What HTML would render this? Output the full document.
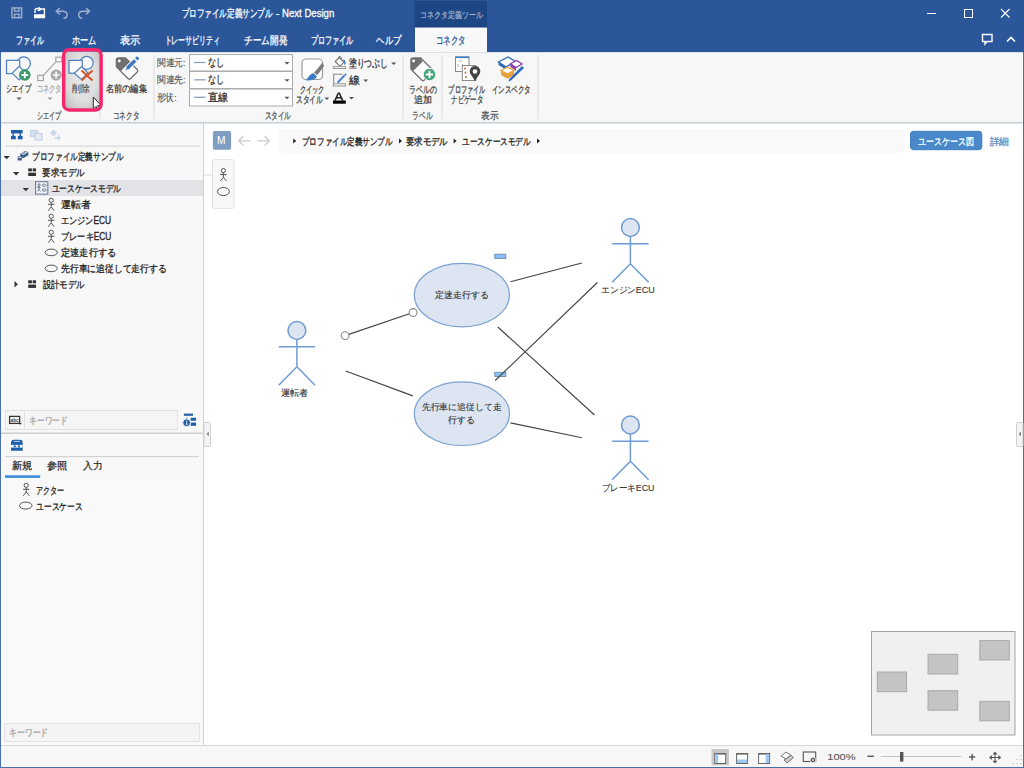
<!DOCTYPE html>
<html lang="ja"><head><meta charset="utf-8">
<style>
*{margin:0;padding:0}
html,body{width:1024px;height:768px;overflow:hidden;background:#2b579a}
svg{display:block;font-family:"Liberation Sans", sans-serif}
</style></head><body>
<svg width="1024" height="768" viewBox="0 0 1024 768">
<rect x="0" y="0" width="1024" height="768" fill="#4a6fab"/><rect x="0" y="0" width="1024" height="52" fill="#2b579a"/><rect x="414.5" y="1" width="72.5" height="27" fill="#1d4784"/><rect x="414.5" y="26.6" width="72.5" height="1" fill="#163d78"/><rect x="1" y="52" width="1022" height="70" fill="#f7f7f7"/><rect x="415" y="27.5" width="72" height="25" fill="#f8f8f8"/><rect x="1" y="52" width="1022" height="1" fill="#d5e0ea"/><rect x="1" y="123" width="203" height="622" fill="#f8f8f8"/><rect x="203" y="123" width="1" height="622" fill="#d0d0d0"/><rect x="204" y="123" width="819" height="622" fill="#ffffff"/><rect x="1" y="122" width="1022" height="1.5" fill="#c3d0d9"/><rect x="1" y="745" width="1022" height="22" fill="#f7f7f7"/><rect x="1" y="745" width="1022" height="1" fill="#d8d8d8"/><text x="181.50" y="16.60" font-size="11.16" fill="#ffffff" textLength="91.00" lengthAdjust="spacingAndGlyphs" stroke="#ffffff" stroke-width="0.3">プロファイル定義サンプル</text><text x="275.80" y="16.60" font-size="11.16" fill="#ffffff" textLength="3.70" lengthAdjust="spacingAndGlyphs" stroke="#ffffff" stroke-width="0.3">-</text><text x="282.00" y="16.60" font-size="11.62" fill="#ffffff" textLength="52.30" lengthAdjust="spacingAndGlyphs" stroke="#ffffff" stroke-width="0.3">Next Design</text><text x="419.50" y="17.60" font-size="9.3" fill="#adbcd3" textLength="63.00" lengthAdjust="spacingAndGlyphs" stroke="#adbcd3" stroke-width="0.15">コネクタ定義ツール</text><text x="15.50" y="44.30" font-size="10.7" fill="#ffffff" textLength="28.00" lengthAdjust="spacingAndGlyphs" stroke="#ffffff" stroke-width="0.3">ファイル</text><text x="71.80" y="44.30" font-size="10.7" fill="#ffffff" textLength="24.70" lengthAdjust="spacingAndGlyphs" stroke="#ffffff" stroke-width="0.3">ホーム</text><text x="120.10" y="44.30" font-size="10.7" fill="#ffffff" textLength="20.40" lengthAdjust="spacingAndGlyphs" stroke="#ffffff" stroke-width="0.3">表示</text><text x="164.50" y="44.30" font-size="10.7" fill="#ffffff" textLength="55.70" lengthAdjust="spacingAndGlyphs" stroke="#ffffff" stroke-width="0.3">トレーサビリティ</text><text x="244.00" y="44.30" font-size="10.7" fill="#ffffff" textLength="43.20" lengthAdjust="spacingAndGlyphs" stroke="#ffffff" stroke-width="0.3">チーム開発</text><text x="310.70" y="44.30" font-size="10.7" fill="#ffffff" textLength="42.70" lengthAdjust="spacingAndGlyphs" stroke="#ffffff" stroke-width="0.3">プロファイル</text><text x="376.40" y="44.30" font-size="10.7" fill="#ffffff" textLength="24.90" lengthAdjust="spacingAndGlyphs" stroke="#ffffff" stroke-width="0.3">ヘルプ</text><text x="435.90" y="44.30" font-size="10.7" fill="#2b579a" textLength="30.00" lengthAdjust="spacingAndGlyphs" stroke="#2b579a" stroke-width="0.3">コネクタ</text><g fill="none" stroke="#9cb0cf" stroke-width="1.4"><rect x="12" y="7.9" width="9.6" height="9.8"/><path d="M14.6 7.9 v3.2 h4.4 v-3.2"/><path d="M14.6 17.7 v-3.6 h4.4 v3.6"/></g><path d="M37.5 10.2 h2.2 l1 -1.2 h3.7 v8.6" fill="none" stroke="#fff" stroke-width="1.4"/><path d="M34 14.2 h9.5 l1.6 1 v3.1 h-11.1 z" fill="#fff"/><path d="M35 13 v-2.5 q0 -2 2 -2 h2" fill="none" stroke="#fff" stroke-width="1.3"/><path d="M38.8 6.6 l2.4 1.9 l-2.4 1.9 z" fill="#fff"/><path d="M57 11.2 h5.5 c3 0 4.6 1.6 4.6 3.6 c0 2 -1.6 3.5 -3.6 3.5" fill="none" stroke="#9cb0cf" stroke-width="1.5"/><path d="M59.8 8 l-3.5 3.2 l3.5 3.2" fill="none" stroke="#9cb0cf" stroke-width="1.5"/><path d="M88.8 11.2 h-5.5 c-3 0 -4.6 1.6 -4.6 3.6 c0 2 1.6 3.5 3.6 3.5" fill="none" stroke="#9cb0cf" stroke-width="1.5"/><path d="M86 8 l3.5 3.2 l-3.5 3.2" fill="none" stroke="#9cb0cf" stroke-width="1.5"/><line x1="927" y1="13.5" x2="936" y2="13.5" stroke="#ffffff" stroke-width="1"/><rect x="964.5" y="9.5" width="8" height="8" fill="none" stroke="#ffffff" stroke-width="1"/><path d="M1001 9 L1009.5 17.5 M1009.5 9 L1001 17.5" stroke="#fff" stroke-width="1.1"/><path d="M982.5 34.5 h9.5 v7 h-5 l-2 2.5 v-2.5 h-2.5 z" fill="none" stroke="#fff" stroke-width="1.4"/><path d="M1007 41.5 l4 -4 l4 4" fill="none" stroke="#fff" stroke-width="1.6"/><rect x="153.5" y="55" width="1" height="64" fill="#dcdcdc"/><rect x="402.5" y="55" width="1" height="64" fill="#dcdcdc"/><rect x="441.5" y="55" width="1" height="64" fill="#dcdcdc"/><rect x="537.5" y="55" width="1" height="64" fill="#dcdcdc"/><rect x="99.5" y="104" width="1" height="15" fill="#dcdcdc"/><g fill="none" stroke="#4a7fc1" stroke-width="1.2"><circle cx="23.7" cy="63.6" r="6.7" fill="#f7f7f7"/><rect x="6.5" y="60.3" width="13.2" height="13.3" fill="#f7f7f7"/><path d="M12.2 73.1 L19.2 66.3 L26 73.1 L19.2 80 Z" fill="#f7f7f7"/></g><circle cx="24.8" cy="75" r="5.8" fill="#3d9a6b"/><path d="M21.5 75 h6.6 M24.8 71.7 v6.6" stroke="#fff" stroke-width="1.8"/><text x="5.90" y="92.30" font-size="10.23" fill="#444" textLength="25.10" lengthAdjust="spacingAndGlyphs" stroke="#444" stroke-width="0.3">シエイプ</text><path d="M16.5 97.5 h5 l-2.5 2.5 z" fill="#555"/><g fill="none" stroke="#a5a5a5" stroke-width="1.2"><rect x="37.8" y="75.4" width="5.6" height="5.2"/><rect x="55.8" y="57.2" width="6" height="4.6"/><path d="M43.4 75.4 L55.8 61.8"/></g><circle cx="56.2" cy="75" r="5.6" fill="#aaaaaa"/><path d="M53 75 h6.4 M56.2 71.8 v6.4" stroke="#fff" stroke-width="1.7"/><text x="36.50" y="92.30" font-size="10.23" fill="#a8a8a8" textLength="25.00" lengthAdjust="spacingAndGlyphs" stroke="#a8a8a8" stroke-width="0.3">コネクタ</text><path d="M47.5 97.5 h5 l-2.5 2.5 z" fill="#999"/><text x="37.00" y="118.80" font-size="10.23" fill="#555" textLength="24.50" lengthAdjust="spacingAndGlyphs" stroke="#555" stroke-width="0.3">シエイプ</text><defs><radialGradient id="gbtn" cx="50%" cy="45%" r="70%"><stop offset="0" stop-color="#e9e9e9"/><stop offset="0.6" stop-color="#dedede"/><stop offset="1" stop-color="#bdbdbd"/></radialGradient></defs><rect x="65.5" y="51.5" width="34" height="57" fill="url(#gbtn)"/><g fill="none" stroke="#4a7fc1" stroke-width="1.2"><circle cx="86.7" cy="62.8" r="6.5" fill="#f8f8f8"/><rect x="69" y="60.4" width="13.2" height="12.8" fill="#fafafa"/><path d="M74.3 73.2 L81.5 66.5 L88 73 L81.5 79.5 Z" fill="#fafafa"/></g><path d="M81.5 70.5 L92.5 80.5 M92.5 70.5 L81.5 80.5" stroke="#d9532a" stroke-width="2"/><text x="71.80" y="92.30" font-size="10.23" fill="#4a4a4a" textLength="17.80" lengthAdjust="spacingAndGlyphs" stroke="#4a4a4a" stroke-width="0.15">削除</text><path d="M93.3 97 L93.3 109 L96 106.3 L98 110.5 L99.5 109.8 L97.6 105.7 L101.2 105.7 Z" fill="#fff" stroke="#2a2a2a" stroke-width="1"/><rect x="63.7" y="49.7" width="37.4" height="60.2" rx="5.5" fill="none" stroke="#f5276a" stroke-width="3.5"/><path d="M116.3 60 Q116.3 57.8 118.5 57.8 L125.5 57.8 L137.2 69.5 Q138.4 70.75 137.2 72 L130.6 78.5 Q129.3 79.8 128 78.5 L116.9 67.4 Q116.3 66.8 116.3 66 Z" fill="#fff" stroke="#707070" stroke-width="1.3"/><path d="M116.3 60 Q116.3 57.8 118.5 57.8 L125.5 57.8 L129.9 62.2 L120.6 71.3 L116.9 67.4 Q116.3 66.8 116.3 66 Z" fill="#707070"/><circle cx="119.3" cy="61" r="1.4" fill="#fff"/><path d="M125.3 70.3 L136.6 59" stroke="#f7f7f7" stroke-width="5.2" stroke-linecap="round"/><path d="M127.3 68.3 L135.2 60.4" stroke="#3a78bf" stroke-width="3.4"/><path d="M136.3 59.3 L138.2 57.4" stroke="#3a78bf" stroke-width="3.4"/><path d="M127.6 66.3 L125.2 70.6 L129.5 68.2 Z" fill="#3a78bf"/><text x="105.50" y="92.30" font-size="10.23" fill="#444" textLength="41.50" lengthAdjust="spacingAndGlyphs" stroke="#444" stroke-width="0.3">名前の編集</text><text x="112.90" y="118.80" font-size="10.23" fill="#555" textLength="26.20" lengthAdjust="spacingAndGlyphs" stroke="#555" stroke-width="0.3">コネクタ</text><text x="156.80" y="65.80" font-size="9.77" fill="#5a5a5a" textLength="28.70" lengthAdjust="spacingAndGlyphs" stroke="#5a5a5a" stroke-width="0.15">関連元:</text><text x="156.80" y="83.00" font-size="9.77" fill="#5a5a5a" textLength="28.70" lengthAdjust="spacingAndGlyphs" stroke="#5a5a5a" stroke-width="0.15">関連先:</text><text x="156.80" y="100.50" font-size="9.77" fill="#5a5a5a" textLength="19.70" lengthAdjust="spacingAndGlyphs" stroke="#5a5a5a" stroke-width="0.15">形状:</text><rect x="189.5" y="54.5" width="103" height="16.5" fill="#ffffff" stroke="#ababab" stroke-width="1"/><rect x="189.5" y="71.5" width="103" height="17" fill="#ffffff" stroke="#ababab" stroke-width="1"/><rect x="189.5" y="89" width="103" height="17" fill="#ffffff" stroke="#ababab" stroke-width="1"/><line x1="194.2" y1="62.5" x2="205.7" y2="62.5" stroke="#8ea2bf" stroke-width="1.3"/><text x="208.10" y="66.10" font-size="10.7" fill="#333" textLength="16.40" lengthAdjust="spacingAndGlyphs" stroke="#333" stroke-width="0.3">なし</text><path d="M284.5 62.0 h5 l-2.5 2.5 z" fill="#555"/><line x1="194.2" y1="79.8" x2="205.7" y2="79.8" stroke="#8ea2bf" stroke-width="1.3"/><text x="208.10" y="83.40" font-size="10.7" fill="#333" textLength="16.40" lengthAdjust="spacingAndGlyphs" stroke="#333" stroke-width="0.3">なし</text><path d="M284.5 79.3 h5 l-2.5 2.5 z" fill="#555"/><line x1="194.2" y1="97.3" x2="205.7" y2="97.3" stroke="#8ea2bf" stroke-width="1.3"/><text x="208.10" y="100.90" font-size="10.7" fill="#333" textLength="20.00" lengthAdjust="spacingAndGlyphs" stroke="#333" stroke-width="0.3">直線</text><path d="M284.5 96.8 h5 l-2.5 2.5 z" fill="#555"/><text x="264.50" y="118.80" font-size="10.23" fill="#555" textLength="26.60" lengthAdjust="spacingAndGlyphs" stroke="#555" stroke-width="0.3">スタイル</text><rect x="302" y="59" width="20.5" height="20.5" rx="4" fill="#fff" stroke="#9a9a9a" stroke-width="1.2"/><path d="M322.5 62.5 L316 70.5 L314 72.5 L317 75 L319 73 L324 66 Z" fill="#7a7a7a"/><path d="M313.5 73 L317 76.5 C315 80 311 80.5 306 80.5 C308 78 309 74.5 313.5 73 Z" fill="#3c7ec6"/><text x="299.50" y="92.60" font-size="10.23" fill="#444" textLength="25.00" lengthAdjust="spacingAndGlyphs" stroke="#444" stroke-width="0.3">クイック</text><text x="295.90" y="102.50" font-size="10.23" fill="#444" textLength="26.80" lengthAdjust="spacingAndGlyphs" stroke="#444" stroke-width="0.3">スタイル</text><path d="M324.3 97.5 h5 l-2.5 2.5 z" fill="#555"/><path d="M335.2 61.5 L339.3 57.6 L344 62.3 L339.9 66.2 Z" fill="#fff" stroke="#777" stroke-width="1.1"/><path d="M338.3 58.5 Q338.3 56 340 56.2 Q341.5 56.5 341.2 59.5" fill="none" stroke="#777" stroke-width="0.9"/><path d="M343.2 59.2 C345.8 60 346.2 62.8 345 65.4 C344.2 64 343.6 62.6 343.6 61.5 Z" fill="#3c7ec6"/><rect x="333.3" y="66.7" width="12.2" height="1.8" fill="#fff" stroke="#8a8a8a" stroke-width="0.9"/><text x="348.70" y="66.50" font-size="10.7" fill="#333" textLength="39.10" lengthAdjust="spacingAndGlyphs" stroke="#333" stroke-width="0.3">塗りつぶし</text><path d="M391.2 62.5 h5 l-2.5 2.5 z" fill="#555"/><path d="M342.5 74.2 h-8.8 v9.2" fill="none" stroke="#8a8a8a" stroke-width="1.1"/><rect x="333.3" y="83.8" width="12.2" height="2.2" fill="#fff" stroke="#8a8a8a" stroke-width="0.9"/><path d="M337.6 82.6 L344.6 75.4" stroke="#3c7ec6" stroke-width="2"/><path d="M345 75 L346 74" stroke="#3c7ec6" stroke-width="2"/><text x="348.70" y="84.10" font-size="10.7" fill="#333" textLength="10.90" lengthAdjust="spacingAndGlyphs" stroke="#333" stroke-width="0.3">線</text><path d="M363.2 79.5 h5 l-2.5 2.5 z" fill="#555"/><path d="M334 100.6 L337.8 92.6 L339.8 92.6 L343.6 100.6 L341.7 100.6 L340.8 98.4 L336.8 98.4 L335.9 100.6 Z M337.4 96.9 L340.2 96.9 L338.8 93.8 Z" fill="#222" fill-rule="evenodd"/><rect x="333" y="100.5" width="12.8" height="3.2" fill="#000000"/><path d="M349 97 h5 l-2.5 2.5 z" fill="#555"/><path d="M410.9 60.2 Q410.9 58 413.1 58 L420.7 58 L432.5 69.8 L424 80.3 Q423 81.2 422 80.2 L411.5 69.7 Q410.9 69 410.9 68 Z" fill="#fff" stroke="#707070" stroke-width="1.3"/><path d="M410.9 60.2 Q410.9 58 413.1 58 L420.7 58 L422.5 61.8 L413.6 70.5 L411.5 69.7 Q410.9 69 410.9 68 Z" fill="#707070"/><circle cx="413.6" cy="61" r="1.4" fill="#fff"/><circle cx="429.5" cy="74.5" r="6.2" fill="#41a37b" stroke="#f7f7f7" stroke-width="1"/><path d="M425.8 74.5 h7.4 M429.5 70.8 v7.4" stroke="#fff" stroke-width="1.9"/><text x="408.70" y="92.90" font-size="10.23" fill="#444" textLength="27.90" lengthAdjust="spacingAndGlyphs" stroke="#444" stroke-width="0.3">ラベルの</text><text x="413.70" y="102.80" font-size="10.23" fill="#444" textLength="18.00" lengthAdjust="spacingAndGlyphs" stroke="#444" stroke-width="0.3">追加</text><text x="412.20" y="118.80" font-size="10.23" fill="#555" textLength="20.20" lengthAdjust="spacingAndGlyphs" stroke="#555" stroke-width="0.3">ラベル</text><rect x="455.5" y="57" width="13.5" height="14.5" fill="#fff" stroke="#888" stroke-width="1"/><rect x="455.5" y="56.5" width="13.5" height="1.6" fill="#3c7ec6"/><path d="M459 61 h3 M458 64 v3 M462 64 l2 2" stroke="#aaa" stroke-width="0.9"/><rect x="462.3" y="65.5" width="13.5" height="15" fill="#fff" stroke="#888" stroke-width="1"/><circle cx="465" cy="68.5" r="0.9" fill="#e0452a"/><circle cx="465.5" cy="72.5" r="0.9" fill="#e0452a"/><circle cx="466" cy="77" r="0.9" fill="#e0452a"/><path d="M475 81 L470.2 73.5 A5.3 5.3 0 1 1 479.8 73.5 Z" fill="#454545"/><circle cx="475" cy="71.5" r="2.3" fill="#fff"/><text x="448.40" y="92.90" font-size="10.23" fill="#444" textLength="37.10" lengthAdjust="spacingAndGlyphs" stroke="#444" stroke-width="0.3">プロファイル</text><text x="451.20" y="102.90" font-size="10.23" fill="#444" textLength="32.10" lengthAdjust="spacingAndGlyphs" stroke="#444" stroke-width="0.3">ナビゲータ</text><path d="M498.5 62 L508 57 L515.5 61.5 L506 66.8 Z" fill="#fff" stroke="#2e6bb8" stroke-width="1.3"/><path d="M498.5 62 L498.5 65 L506 69.8 L506 66.8 Z" fill="#2e6bb8"/><path d="M510.5 63.8 L516.5 60.5 L522 64 L516 67.5 Z" fill="#fff" stroke="#8a3fb0" stroke-width="1.3"/><path d="M510.5 63.8 L510.5 67 L516 70.7 L516 67.5 Z" fill="#8a3fb0"/><path d="M501 70.5 L507.5 67 L514 70.5 L507.5 74 Z" fill="#fff" stroke="#e8a23c" stroke-width="1.3"/><path d="M501 70.5 L501 75 L507.5 78.8 L514 75 L514 70.5 L507.5 74 Z" fill="#e8a23c"/><path d="M522 66 L524 68 L511 80.5 L508.5 81.5 L509.3 79 Z" fill="#2e6bb8"/><text x="491.50" y="92.90" font-size="10.23" fill="#444" textLength="39.30" lengthAdjust="spacingAndGlyphs" stroke="#444" stroke-width="0.3">インスペクタ</text><text x="480.90" y="118.80" font-size="10.23" fill="#555" textLength="17.30" lengthAdjust="spacingAndGlyphs" stroke="#555" stroke-width="0.3">表示</text><g fill="#1f5ea8"><rect x="11" y="130" width="11.6" height="3.4"/><rect x="12.5" y="133" width="1.4" height="3"/><rect x="19.5" y="133" width="1.4" height="3"/><rect x="11" y="135.9" width="4.8" height="3.4"/><rect x="17.8" y="135.9" width="4.8" height="3.4"/></g><g fill="none" stroke="#c5d5e6" stroke-width="1.3"><rect x="30.5" y="130.5" width="7" height="6" fill="#d6e2ee"/><rect x="35" y="133.5" width="7" height="6.5" fill="#e4ecf4"/></g><g fill="#c9d8e8"><path d="M50 133 L53.5 129.5 L57 133 L53.5 136.5 Z"/><path d="M55 137 L58 137 L58 134 L61 137.5 L58 141 L58 139 L55 139 Z"/></g><rect x="5" y="145.5" width="195" height="1.3" fill="#d9d9d9"/><rect x="1" y="180" width="202" height="16" fill="#e3e3e7"/><path d="M3.5 155.9 h6.4 l-3.2 3.4 z" fill="#333"/><path d="M12.9 172 h6.4 l-3.2 3.4 z" fill="#333"/><path d="M22.6 187.9 h6.4 l-3.2 3.4 z" fill="#333"/><path d="M14.5 281 v6.4 l3.4 -3.2 z" fill="#333"/><path d="M20.2 153.8 L25.3 150.7 L28.4 152.4 L28.4 155.2 L23.3 158.3 L20.2 156.6 Z" fill="#3f5f88"/><path d="M20.9 153.8 L25.3 151.2 L27.6 152.5 L23.2 155.1 Z" fill="#e3e9f1"/><path d="M22.5 153.9 L25.5 152.1" stroke="#3f5f88" stroke-width="0.8"/><rect x="17.7" y="156.2" width="4.1" height="4.3" fill="#3f5f88"/><rect x="18.3" y="156.7" width="2.9" height="1.2" fill="#dfe6ef"/><g fill="#333"><rect x="28.2" y="168.4" width="3.7" height="3"/><rect x="32.7" y="168.4" width="3.3" height="3"/><rect x="28.2" y="172.70000000000002" width="7.8" height="3.3"/></g><g fill="#333"><rect x="28.2" y="280.3" width="3.7" height="3"/><rect x="32.7" y="280.3" width="3.3" height="3"/><rect x="28.2" y="284.6" width="7.8" height="3.3"/></g><rect x="35.6" y="181.7" width="12.2" height="12.4" fill="#f4f6f9" stroke="#6b7e9e" stroke-width="1.1"/><g fill="none" stroke="#4b5d7c" stroke-width="0.8"><circle cx="39" cy="185" r="1.2"/><path d="M39 186.2 v3 M37.3 187.4 h3.4 M37.5 191.5 l1.5 -2.3 l1.5 2.3"/><ellipse cx="44.2" cy="185.3" rx="2" ry="1.2"/><ellipse cx="44.2" cy="190" rx="2" ry="1.2"/></g><text x="32.30" y="160.10" font-size="10.23" fill="#222" textLength="91.20" lengthAdjust="spacingAndGlyphs" stroke="#222" stroke-width="0.3">プロファイル定義サンプル</text><text x="42.20" y="176.10" font-size="10.23" fill="#222" textLength="42.70" lengthAdjust="spacingAndGlyphs" stroke="#222" stroke-width="0.3">要求モデル</text><text x="51.60" y="192.10" font-size="10.23" fill="#222" textLength="69.60" lengthAdjust="spacingAndGlyphs" stroke="#222" stroke-width="0.3">ユースケースモデル</text><g fill="none" stroke="#555" stroke-width="1"><circle cx="51.2" cy="200.3" r="2.1"/><path d="M51.2 202.4 v4.8 M48.0 204.3 h6.4 M48.1 210.8 L51.2 207.0 L54.300000000000004 210.8"/></g><text x="61.00" y="207.80" font-size="10.23" fill="#222" textLength="29.50" lengthAdjust="spacingAndGlyphs" stroke="#222" stroke-width="0.3">運転者</text><g fill="none" stroke="#555" stroke-width="1"><circle cx="51.2" cy="216.3" r="2.1"/><path d="M51.2 218.4 v4.8 M48.0 220.3 h6.4 M48.1 226.8 L51.2 223.0 L54.300000000000004 226.8"/></g><text x="61.00" y="223.80" font-size="10.23" fill="#222" textLength="50.10" lengthAdjust="spacingAndGlyphs" stroke="#222" stroke-width="0.3">エンジンECU</text><g fill="none" stroke="#555" stroke-width="1"><circle cx="51.2" cy="232.3" r="2.1"/><path d="M51.2 234.4 v4.8 M48.0 236.3 h6.4 M48.1 242.8 L51.2 239.0 L54.300000000000004 242.8"/></g><text x="61.00" y="239.80" font-size="10.23" fill="#222" textLength="50.40" lengthAdjust="spacingAndGlyphs" stroke="#222" stroke-width="0.3">ブレーキECU</text><ellipse cx="51.2" cy="252.39999999999998" rx="6.099999999999998" ry="3.299999999999997" fill="none" stroke="#555" stroke-width="1"/><text x="61.00" y="255.90" font-size="10.23" fill="#222" textLength="55.20" lengthAdjust="spacingAndGlyphs" stroke="#222" stroke-width="0.3">定速走行する</text><ellipse cx="51.2" cy="268.40000000000003" rx="6.099999999999998" ry="3.3000000000000114" fill="none" stroke="#555" stroke-width="1"/><text x="61.00" y="271.90" font-size="10.23" fill="#222" textLength="105.70" lengthAdjust="spacingAndGlyphs" stroke="#222" stroke-width="0.3">先行車に追従して走行する</text><text x="42.70" y="287.80" font-size="10.23" fill="#222" textLength="42.00" lengthAdjust="spacingAndGlyphs" stroke="#222" stroke-width="0.3">設計モデル</text><rect x="5.5" y="410.5" width="172" height="19" fill="#f5f5f5" stroke="#e1e1e1" stroke-width="1"/><rect x="24" y="411" width="1" height="18" fill="#e1e1e1"/><rect x="9.6" y="416.4" width="10" height="7" fill="#fff" stroke="#333" stroke-width="1.3"/><path d="M18.8 423 h3 l-1.5 1.8z" fill="#333"/><text x="10.6" y="422.3" font-size="5.5" font-weight="bold" fill="#333" textLength="8" lengthAdjust="spacingAndGlyphs">abc</text><text x="29.20" y="424.10" font-size="10.23" fill="#a5a5a5" textLength="38.50" lengthAdjust="spacingAndGlyphs" stroke="#a5a5a5" stroke-width="0.3">キーワード</text><g fill="#1f5ea8"><rect x="183.9" y="413.6" width="9.1" height="2.2"/><rect x="190.6" y="417.8" width="5.5" height="2.9"/><rect x="190.6" y="422.6" width="5.5" height="3.2"/></g><circle cx="186.6" cy="422.7" r="3.9" fill="#1f5ea8" stroke="#f8f8f8" stroke-width="1"/><rect x="186" y="420.6" width="1.3" height="1.2" fill="#dfe9f5"/><rect x="186" y="422.4" width="1.3" height="2.6" fill="#dfe9f5"/><path d="M185.3 418.2 h2.6 l-1.3 -1.3z" fill="#999"/><rect x="1" y="432.5" width="202" height="1.5" fill="#cfcfcf"/><path d="M11 443 Q11 439.8 14 439.8 L19.8 439.8 Q22.7 439.8 22.7 443 L22.7 450.8 L11 450.8 Z" fill="#1f5ea8"/><rect x="14" y="440.9" width="6" height="0.9" fill="#cfe0f2"/><rect x="11" y="444.9" width="11.7" height="2.7" fill="#f2f6fb"/><rect x="13.8" y="445.4" width="2" height="1.8" fill="#1f5ea8"/><rect x="17.9" y="445.4" width="2" height="1.8" fill="#1f5ea8"/><rect x="5" y="456" width="194" height="1.2" fill="#d3d3d3"/><text x="12.00" y="469.30" font-size="10.23" fill="#333" textLength="20.50" lengthAdjust="spacingAndGlyphs" stroke="#333" stroke-width="0.3">新規</text><text x="47.20" y="469.30" font-size="10.23" fill="#333" textLength="20.50" lengthAdjust="spacingAndGlyphs" stroke="#333" stroke-width="0.3">参照</text><text x="83.10" y="469.30" font-size="10.23" fill="#333" textLength="19.40" lengthAdjust="spacingAndGlyphs" stroke="#333" stroke-width="0.3">入力</text><rect x="5" y="475.3" width="35.2" height="2.6" fill="#3a8fd6"/><rect x="1" y="480" width="202" height="265" fill="#f9f9f9"/><g fill="none" stroke="#555" stroke-width="1"><circle cx="26.2" cy="485.3" r="2.1"/><path d="M26.2 487.4 v4.8 M23.0 489.3 h6.4 M23.099999999999998 495.8 L26.2 492 L29.3 495.8"/></g><text x="36.20" y="493.70" font-size="10.23" fill="#222" textLength="28.30" lengthAdjust="spacingAndGlyphs" stroke="#222" stroke-width="0.3">アクター</text><ellipse cx="25.75" cy="505.6" rx="6.25" ry="3.5" fill="none" stroke="#555" stroke-width="1"/><text x="36.20" y="509.80" font-size="10.23" fill="#222" textLength="46.30" lengthAdjust="spacingAndGlyphs" stroke="#222" stroke-width="0.3">ユースケース</text><rect x="4.5" y="723.5" width="195" height="18" fill="#f4f4f4" stroke="#e1e1e1" stroke-width="1"/><text x="9.10" y="736.10" font-size="10.23" fill="#a5a5a5" textLength="39.10" lengthAdjust="spacingAndGlyphs" stroke="#a5a5a5" stroke-width="0.3">キーワード</text><rect x="204" y="422.5" width="6.5" height="24" fill="#f3f4f6" stroke="#cfcfcf" stroke-width="1" rx="1"/><path d="M208.8 431.5 v5 l-2.5 -2.5z" fill="#888"/><rect x="1016.5" y="422.5" width="6.5" height="24" fill="#f3f4f6" stroke="#cfcfcf" stroke-width="1" rx="1"/><path d="M1021 431.5 v5 l-2.5 -2.5z" fill="#888"/><rect x="212.9" y="131.1" width="18.2" height="18.7" fill="#809dc4" rx="2"/><text x="217.00" y="144.30" font-size="10.23" fill="#ffffff">M</text><path d="M250.6 140.8 h-12 M243.5 136 l-4.8 4.8 l4.8 4.8" fill="none" stroke="#cacaca" stroke-width="1.3"/><path d="M257.4 140.8 h12 M264.5 136 l4.8 4.8 l-4.8 4.8" fill="none" stroke="#cacaca" stroke-width="1.3"/><rect x="278.5" y="129" width="626" height="23.8" fill="#f9f9f9" rx="4"/><path d="M293.2 138.5 v5 l3 -2.5z" fill="#222"/><path d="M399 138.5 v5 l3 -2.5z" fill="#222"/><path d="M453.6 138.5 v5 l3 -2.5z" fill="#222"/><path d="M537 138.5 v5 l3 -2.5z" fill="#222"/><text x="301.90" y="144.50" font-size="10.23" fill="#222" textLength="90.70" lengthAdjust="spacingAndGlyphs" stroke="#222" stroke-width="0.3">プロファイル定義サンプル</text><text x="405.80" y="144.50" font-size="10.23" fill="#222" textLength="42.10" lengthAdjust="spacingAndGlyphs" stroke="#222" stroke-width="0.3">要求モデル</text><text x="462.20" y="144.50" font-size="10.23" fill="#222" textLength="68.50" lengthAdjust="spacingAndGlyphs" stroke="#222" stroke-width="0.3">ユースケースモデル</text><rect x="910.5" y="131.3" width="71.3" height="18.4" fill="#4a89c9" stroke="#3f7dbf" stroke-width="1" rx="3"/><text x="918.20" y="144.90" font-size="10.23" fill="#ffffff" textLength="56.30" lengthAdjust="spacingAndGlyphs" stroke="#ffffff" stroke-width="0.3">ユースケース図</text><text x="989.50" y="144.90" font-size="10.23" fill="#5b8cc2" textLength="19.60" lengthAdjust="spacingAndGlyphs" stroke="#5b8cc2" stroke-width="0.3">詳細</text><rect x="212.5" y="159.5" width="21.5" height="49" fill="#f8f8f8" stroke="#e3e3e3" stroke-width="1" rx="2"/><g fill="none" stroke="#555" stroke-width="1"><circle cx="223.4" cy="170.60000000000002" r="2.1"/><path d="M223.4 172.70000000000002 v4.8 M220.20000000000002 174.60000000000002 h6.4 M220.3 181.10000000000002 L223.4 177.3 L226.5 181.10000000000002"/></g><ellipse cx="223.45" cy="191.55" rx="5.950000000000003" ry="4.049999999999997" fill="none" stroke="#555" stroke-width="1"/><rect x="204" y="174.5" width="8" height="1" fill="#dddddd"/><rect x="494.8" y="254.2" width="11" height="4.2" fill="#88c0f8" stroke="#6f8aa8" stroke-width="0.9"/><rect x="494.8" y="372.3" width="11" height="4.2" fill="#88c0f8" stroke="#6f8aa8" stroke-width="0.9"/><line x1="345.1" y1="335.6" x2="413.1" y2="312.5" stroke="#444444" stroke-width="1.15"/><line x1="345.7" y1="371" x2="412.8" y2="395.9" stroke="#444444" stroke-width="1.15"/><line x1="510.5" y1="281.7" x2="581.8" y2="263" stroke="#444444" stroke-width="1.15"/><line x1="497.8" y1="327" x2="594.5" y2="415" stroke="#444444" stroke-width="1.15"/><line x1="597.4" y1="282.5" x2="495.2" y2="380.5" stroke="#444444" stroke-width="1.15"/><line x1="510.5" y1="422.9" x2="581.8" y2="437.7" stroke="#444444" stroke-width="1.15"/><ellipse cx="461.9" cy="295.1" rx="47.6" ry="31.8" fill="#dce5f1" stroke="#7ca2d2" stroke-width="1.2"/><ellipse cx="461.9" cy="413.7" rx="47.6" ry="31.8" fill="#dce5f1" stroke="#7ca2d2" stroke-width="1.2"/><text x="434.80" y="297.80" font-size="9.3" fill="#333" textLength="53.70" lengthAdjust="spacingAndGlyphs" stroke="#333" stroke-width="0.12">定速走行する</text><text x="421.70" y="410.30" font-size="9.3" fill="#333" textLength="79.90" lengthAdjust="spacingAndGlyphs" stroke="#333" stroke-width="0.12">先行車に追従して走</text><text x="447.90" y="423.30" font-size="9.3" fill="#333" textLength="26.90" lengthAdjust="spacingAndGlyphs" stroke="#333" stroke-width="0.12">行する</text><circle cx="345.1" cy="335.6" r="3.9" fill="#fff" stroke="#8a8a8a" stroke-width="1.1"/><circle cx="413.1" cy="312.5" r="3.9" fill="#fff" stroke="#8a8a8a" stroke-width="1.1"/><g fill="none" stroke="#6e9bd3" stroke-width="1.5"><circle cx="296.9" cy="330.5" r="8.9" fill="#dce5f1"/><path d="M296.9 339.4 V366.7 M278.7 346.8 H315.09999999999997 M278.7 385.3 L296.9 366.7 L315.09999999999997 385.3"/></g><g fill="none" stroke="#6e9bd3" stroke-width="1.5"><circle cx="630.4" cy="227.5" r="8.9" fill="#dce5f1"/><path d="M630.4 236.4 V263.7 M612.1999999999999 243.8 H648.6 M612.1999999999999 282.3 L630.4 263.7 L648.6 282.3"/></g><g fill="none" stroke="#6e9bd3" stroke-width="1.5"><circle cx="630.4" cy="425" r="8.9" fill="#dce5f1"/><path d="M630.4 433.9 V461.2 M612.1999999999999 441.3 H648.6 M612.1999999999999 479.8 L630.4 461.2 L648.6 479.8"/></g><text x="281.20" y="395.80" font-size="9.3" fill="#333" textLength="27.40" lengthAdjust="spacingAndGlyphs" stroke="#333" stroke-width="0.12">運転者</text><text x="601.20" y="292.90" font-size="9.3" fill="#333" textLength="53.60" lengthAdjust="spacingAndGlyphs" stroke="#333" stroke-width="0.12">エンジンECU</text><text x="601.50" y="490.60" font-size="9.3" fill="#333" textLength="53.00" lengthAdjust="spacingAndGlyphs" stroke="#333" stroke-width="0.12">ブレーキECU</text><rect x="871.5" y="631.5" width="143.5" height="103.5" fill="#f0f0f0" stroke="#a3a3a3" stroke-width="1"/><rect x="877.3" y="672" width="29.300000000000068" height="19.700000000000045" fill="#c4c4c4" stroke="#a9a9a9" stroke-width="1"/><rect x="928" y="654.3" width="29.700000000000045" height="19.700000000000045" fill="#c4c4c4" stroke="#a9a9a9" stroke-width="1"/><rect x="928" y="690.7" width="29.700000000000045" height="19.5" fill="#c4c4c4" stroke="#a9a9a9" stroke-width="1"/><rect x="979.8" y="640.6" width="29.5" height="19.399999999999977" fill="#c4c4c4" stroke="#a9a9a9" stroke-width="1"/><rect x="979.8" y="701.3" width="29.5" height="19.5" fill="#c4c4c4" stroke="#a9a9a9" stroke-width="1"/><rect x="711.5" y="749" width="17.5" height="16.3" fill="#c9c9c9"/><rect x="714.7" y="753.5" width="11" height="10" fill="#fff" stroke="#666" stroke-width="1"/><rect x="714.2" y="753" width="12" height="1.6" fill="#666"/><rect x="715.2" y="754" width="3" height="9" fill="#9ec8f0"/><rect x="736.6" y="753.5" width="11" height="10" fill="#fff" stroke="#666" stroke-width="1"/><rect x="736.1" y="753" width="12" height="1.6" fill="#666"/><rect x="737.1" y="759.5" width="10" height="3.5" fill="#9ec8f0"/><rect x="758.6" y="753.5" width="11" height="10" fill="#fff" stroke="#666" stroke-width="1"/><rect x="758.1" y="753" width="12" height="1.6" fill="#666"/><rect x="765.6" y="754" width="3.5" height="9" fill="#9ec8f0"/><g fill="none" stroke="#666" stroke-width="0.9"><path d="M781 756 L786 752 L791 755 L786 759 Z"/><path d="M784 760 L791 755.5 L793.5 757.5 L787 763 Z" fill="#ccc"/></g><rect x="803.3" y="752" width="12.4" height="9.5" fill="none" stroke="#555" stroke-width="1.1"/><circle cx="813" cy="760" r="2.8" fill="#555" stroke="#f3f3f3" stroke-width="0.8"/><path d="M811.6 758.6 l2.8 2.8 M814.4 758.6 l-2.8 2.8" stroke="#f3f3f3" stroke-width="0.7"/><text x="827.30" y="760.10" font-size="9.3" fill="#555" textLength="28.30" lengthAdjust="spacingAndGlyphs" stroke="#555" stroke-width="0.1">100%</text><rect x="867.4" y="755.6" width="6.4" height="1.4" fill="#555"/><rect x="880.8" y="756" width="80.4" height="1" fill="#c3c3c3"/><rect x="900" y="752" width="3.4" height="9.6" fill="#555"/><rect x="969" y="756.3" width="6.2" height="1.4" fill="#555"/><rect x="971.4" y="753.9" width="1.4" height="6.4" fill="#555"/><g fill="#555"><path d="M995 751.6 l2.5 2.8 h-5z"/><path d="M995 763.5 l2.5 -2.8 h-5z"/><path d="M989.1 757.5 l2.8 -2.5 v5z"/><path d="M1001.2 757.5 l-2.8 -2.5 v5z"/></g><path d="M991 757.5 h8 M995 753.5 v8" stroke="#555" stroke-width="1"/><rect x="1020.5" y="755" width="1" height="1" fill="#aaaaaa"/><rect x="1016.5" y="759" width="1" height="1" fill="#aaaaaa"/><rect x="1020.5" y="759" width="1" height="1" fill="#aaaaaa"/><rect x="1012.5" y="763" width="1" height="1" fill="#aaaaaa"/><rect x="1016.5" y="763" width="1" height="1" fill="#aaaaaa"/><rect x="1020.5" y="763" width="1" height="1" fill="#aaaaaa"/>
</svg>
</body></html>
